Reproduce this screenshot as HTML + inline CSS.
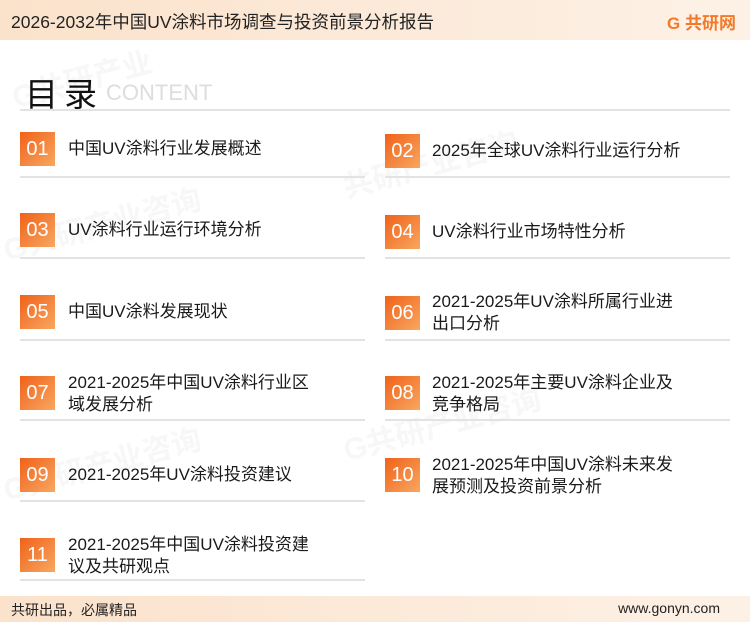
<!DOCTYPE html><html><head><meta charset="utf-8"><style>
body{margin:0;width:750px;height:622px;overflow:hidden;background:#fff;font-family:"Liberation Sans","Noto Sans CJK SC",sans-serif;position:relative;color:#222}
.hd{position:absolute;left:0;top:0;width:750px;height:40px;background:linear-gradient(90deg,#fbe2cb,#fdf1e6);}
.hd .t{position:absolute;left:11px;top:9px;font-size:17.5px;color:#222}
.logo{position:absolute;right:14px;top:9px;font-size:17px;font-weight:bold;color:#f07a2a}
.ft{position:absolute;left:0;top:596px;width:750px;height:26px;background:linear-gradient(90deg,#fbe2cb,#fdf1e6);font-size:14px}
.ft span{position:absolute;top:4px}
.ttl{position:absolute;left:25px;top:68px;font-size:33px;color:#111;letter-spacing:6px}
.cnt{position:absolute;left:106px;top:80px;font-size:22px;color:#ddd}
.line{position:absolute;height:2px;background:#e3e3e6}
.box{position:absolute;width:35px;height:34px;background:linear-gradient(135deg,#f0621a,#f8a760);color:#fff;font-size:20px;text-align:center;line-height:35px}
.tx{position:absolute;font-size:17px;line-height:22px;color:#1a1a1a}
.wm{position:absolute;color:#f7f7f7;font-size:30px;font-weight:bold;transform:rotate(-15deg)}
</style></head><body>
<div class="wm" style="left:10px;top:55px">G共研产业</div>
<div class="wm" style="left:340px;top:140px">共研产业咨询</div>
<div class="wm" style="left:0;top:200px">G共研产业咨询</div>
<div class="wm" style="left:340px;top:400px">G共研产业咨询</div>
<div class="wm" style="left:0;top:440px">G共研产业咨询</div>
<div class="hd"><div class="t">2026-2032年中国UV涂料市场调查与投资前景分析报告</div><div class="logo">G 共研网</div></div>
<div class="ttl">目录</div><div class="cnt">CONTENT</div>
<div class="line" style="left:20px;top:109px;width:710px"></div>

<div class="box" style="left:20px;top:132px">01</div><div class="tx" style="left:68px;top:138px">中国UV涂料行业发展概述</div>
<div class="line" style="left:20px;top:176px;width:345px"></div>
<div class="box" style="left:385px;top:134px">02</div><div class="tx" style="left:432px;top:140px">2025年全球UV涂料行业运行分析</div>
<div class="line" style="left:385px;top:176px;width:345px"></div>

<div class="box" style="left:20px;top:213px">03</div><div class="tx" style="left:68px;top:219px">UV涂料行业运行环境分析</div>
<div class="line" style="left:20px;top:257px;width:345px"></div>
<div class="box" style="left:385px;top:215px">04</div><div class="tx" style="left:432px;top:221px">UV涂料行业市场特性分析</div>
<div class="line" style="left:385px;top:257px;width:345px"></div>

<div class="box" style="left:20px;top:295px">05</div><div class="tx" style="left:68px;top:301px">中国UV涂料发展现状</div>
<div class="line" style="left:20px;top:339px;width:345px"></div>
<div class="box" style="left:385px;top:296px">06</div><div class="tx" style="left:432px;top:291px">2021-2025年UV涂料所属行业进<br>出口分析</div>
<div class="line" style="left:385px;top:339px;width:345px"></div>

<div class="box" style="left:20px;top:376px">07</div><div class="tx" style="left:68px;top:372px">2021-2025年中国UV涂料行业区<br>域发展分析</div>
<div class="line" style="left:20px;top:419px;width:345px"></div>
<div class="box" style="left:385px;top:376px">08</div><div class="tx" style="left:432px;top:372px">2021-2025年主要UV涂料企业及<br>竞争格局</div>
<div class="line" style="left:385px;top:419px;width:345px"></div>

<div class="box" style="left:20px;top:458px">09</div><div class="tx" style="left:68px;top:464px">2021-2025年UV涂料投资建议</div>
<div class="line" style="left:20px;top:500px;width:345px"></div>
<div class="box" style="left:385px;top:458px">10</div><div class="tx" style="left:432px;top:454px">2021-2025年中国UV涂料未来发<br>展预测及投资前景分析</div>

<div class="box" style="left:20px;top:538px">11</div><div class="tx" style="left:68px;top:534px">2021-2025年中国UV涂料投资建<br>议及共研观点</div>
<div class="line" style="left:20px;top:579px;width:345px"></div>

<div class="ft"><span style="left:11px">共研出品，必属精品</span><span style="right:30px">www.gonyn.com</span></div>
</body></html>
